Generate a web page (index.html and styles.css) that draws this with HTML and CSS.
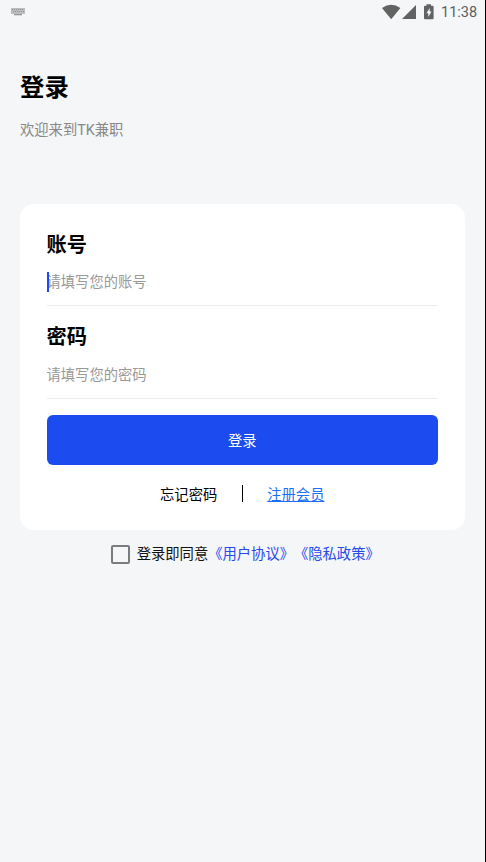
FILE: index.html
```
<!DOCTYPE html>
<html lang="zh-CN">
<head>
<meta charset="utf-8">
<title>登录</title>
<link rel="stylesheet" href="styles.css">
</head>
<body>
<header class="status">
  <svg class="keyboard" width="16" height="8" viewBox="0 0 16 8"><path fill="#bcbdbe" d="M1 0h14v6H1z"/><path stroke="#929394" stroke-width="1" stroke-dasharray="1 1" d="M2 1.5h12M3 3.5h11"/><path fill="#999" d="M4 6h8v1.3H4z"/></svg>
  <svg class="signals" width="54" height="18" viewBox="0 0 54 18"><g fill="#616262"><path d="M0 5Q9.200-1.600 18.400 5L9.200 16.200z"/><path d="M34 2v14H20z"/><path fill-rule="evenodd" d="M44.500 1.300h4.500v1.500h1.600q1 0 1 1v11.400q0 1-1 1H43q-1 0-1-1V3.800q0-1 1-1h1.500zM47.700 5L44.500 10.300h1.800v3.700l3.200-5.500h-1.800z"/></g></svg>
  <span class="time">11:38</span>
</header>
<main class="page">
  <h1>登录</h1>
  <p class="welcome">欢迎来到TK兼职</p>
  <form class="card">
    <div class="field">
      <label>账号</label>
      <div class="input focused">请填写您的账号</div>
    </div>
    <div class="field">
      <label>密码</label>
      <div class="input">请填写您的密码</div>
    </div>
    <button type="button">登录</button>
    <div class="links"><span>忘记密码</span><i></i><a>注册会员</a></div>
  </form>
  <div class="agreement"><span class="checkbox"></span><span>登录即同意<b>《用户协议》《隐私政策》</b></span></div>
</main>
</body>
</html>
```
FILE: styles.css
```
* { box-sizing: border-box; }
body {
  margin: 0;
  height: 862px;
  background: #f4f6f8;
  border-right: 1px solid #000;
  font: 14.3px/20px Roboto, "Noto Sans CJK SC", sans-serif;
  color: #111;
  overflow: hidden;
}
.status { display: flex; height: 24px; padding: 3px 8px 0 10px; }
.keyboard { margin-top: 5px; fill: none; }
.signals { margin-left: auto; }
.time { margin-left: 5px; font-size: 14.5px; line-height: 19px; color: #5d5e5e; width: 36px; white-space: nowrap; }
.page { padding: 0 20px; }
h1 { margin: 46px 0 0; font-size: 24.4px; line-height: 36px; font-weight: 700; color: #000; }
.welcome { margin: 14px 0 0; color: #888; }
.card {
  height: 326px;
  margin-top: 63.500px;
  padding: 27px 27px 0 26.500px;
  border-radius: 14px;
  background: #fff;
}
.field { height: 92.500px; }
label { display: block; font-size: 20.200px; line-height: 28px; font-weight: 700; color: #000; }
.input {
  position: relative;
  height: 47.500px;
  padding-top: 13px;
  border-bottom: 1px solid #ececec;
  color: #999;
}
.field + .field .input { padding-top: 14px; }
.focused::before {
  content: "";
  position: absolute;
  left: 0;
  top: 13px;
  width: 2px;
  height: 20px;
  background: #1e4bef;
}
button {
  display: block;
  width: 100%;
  height: 50.500px;
  margin-top: -1px;
  padding: 2px 0 0;
  border: 0;
  border-radius: 6px;
  background: #1c4bef;
  color: #fff;
  font: inherit;
}
.links { display: flex; justify-content: center; align-items: center; height: 57px; color: #000; }
.links span, .links a { padding-top: 2px; }
.links i { width: 1px; height: 17px; margin: 0 24.500px; background: #000; }
.links a { color: #1c70f5; text-decoration: underline; text-decoration-thickness: 1px; text-underline-offset: 1px; }
.agreement {
  display: flex;
  justify-content: center;
  align-items: center;
  margin-top: 14.500px;
  padding-left: 6px;
  text-spacing-trim: space-all;
}
.checkbox { width: 19px; height: 19px; margin-right: 6.500px; border: 2px solid #7b7c7e; border-radius: 2px; }
.agreement b { font-weight: 400; color: #2948ec; }
```
